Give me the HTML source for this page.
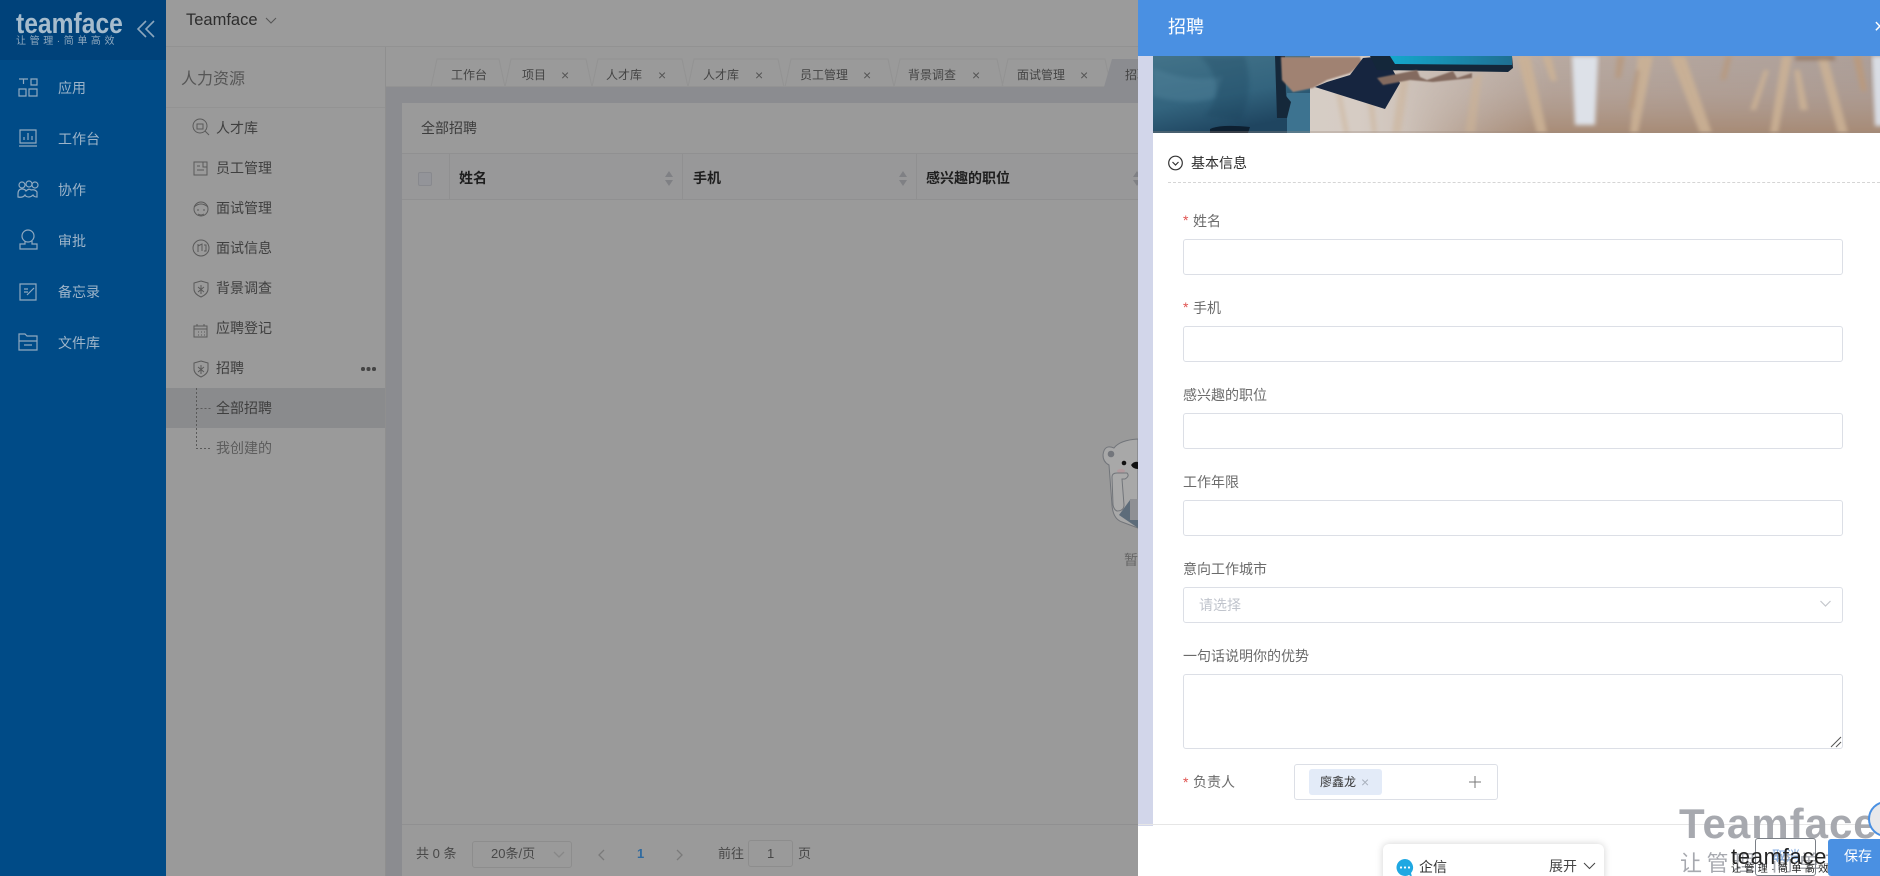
<!DOCTYPE html>
<html lang="zh"><head><meta charset="utf-8"><title>Teamface</title>
<style>
*{box-sizing:border-box;margin:0;padding:0}
html,body{width:1880px;height:876px;overflow:hidden;background:#9a9a9a}
body{position:relative;font-family:"Liberation Sans","Noto Sans CJK SC",sans-serif;font-size:14px}
.a{position:absolute}
.t{position:absolute;white-space:nowrap;line-height:20px;height:20px}
.nav{color:#9db4c9;font-size:14px;left:58px}
.sub{color:#3f3f3f;font-size:14px;left:216px}
.tab{color:#444;font-size:12px;top:65px}
.x{color:#555;font-size:14px;top:65px}
.th{color:#1e1e1e;font-weight:700;font-size:14px;top:168px}
.lbl{color:#6b6b6b;font-size:14px;left:1183px}
.req{color:#e0524f;font-size:14px;left:1183px}
.inp{position:absolute;left:1183px;width:660px;background:#fff;border:1px solid #dcdfe6;border-radius:3px}
svg{position:absolute;overflow:visible}
</style></head><body>

<!-- primary sidebar -->
<div class="a" style="left:0;top:0;width:166px;height:876px;background:#004b87"></div>
<div class="a" style="left:0;top:0;width:166px;height:60px;background:#00427a"></div>
<div class="t" style="left:16px;top:9px;height:30px;line-height:30px;font-size:29px;font-weight:700;color:#a6bccd;transform:scaleX(.85);transform-origin:left">teamface</div>
<div class="t" style="left:16px;top:32px;font-size:10px;color:#8fa9bf;letter-spacing:3.600px">让管理·简单高效</div>
<svg style="left:136px;top:19px" width="20" height="20" fill="none" stroke="#8ba6bd" stroke-width="1.6"><path d="M10 2 2 10l8 8M18 2l-8 8 8 8"/></svg>

<svg style="left:0;top:0" width="166" height="370" fill="none" stroke="#8fa9c0" stroke-width="1.200">
<path d="M19 79h9M23.500 79v5M31 79h6v6h-6zM19 89h7v7h-7zM29 89h8v7h-8z"/>
<path d="M20 130h16v13H20zM19 146h18M24 140v-3M28 140v-7M32 140v-4"/>
<circle cx="22" cy="185" r="3"/><circle cx="29" cy="184" r="3"/><circle cx="35" cy="185" r="3"/><path d="M18 197v-3q0-5 4-5 3 0 4 2 3-3 5-1 4-1 6 2v5q-3 0-4-2-2 2-4 2-3 0-4-2-2 3-7 2z"/>
<circle cx="28" cy="236" r="6"/><path d="M25 241v3h-5v5h17v-5h-5v-3"/>
<path d="M20 284h16v16H20zM24 289h4M24 292h4M27 295l7-7"/>
<path d="M19 334h6l2 2h10v5H19zM19 341h18v9H19zM24 345h8"/>
</svg>
<div class="t nav" style="top:78px">应用</div>
<div class="t nav" style="top:129px">工作台</div>
<div class="t nav" style="top:180px">协作</div>
<div class="t nav" style="top:231px">审批</div>
<div class="t nav" style="top:282px">备忘录</div>
<div class="t nav" style="top:333px">文件库</div>

<!-- top bar -->
<div class="a" style="left:166px;top:0;width:972px;height:47px;background:#9b9b9b;border-bottom:1px solid #929292"></div>
<div class="t" style="left:186px;top:10px;font-size:16.500px;color:#2d2d2d">Teamface</div>
<svg style="left:265px;top:17px" width="12" height="8" fill="none" stroke="#555"><path d="M1 1l5 5 5-5"/></svg>

<!-- secondary sidebar -->
<div class="a" style="left:166px;top:47px;width:220px;height:829px;background:#9a9a9a;border-right:1px solid #8f8f8f"></div>
<div class="a" style="left:166px;top:107px;width:219px;height:1px;background:#939393"></div>
<div class="t" style="left:181px;top:70px;font-size:16px;color:#565656">人力资源</div>
<div class="a" style="left:166px;top:388px;width:219px;height:40px;background:#8a8b8d"></div>
<div class="t sub" style="top:118px">人才库</div>
<div class="t sub" style="top:158px">员工管理</div>
<div class="t sub" style="top:198px">面试管理</div>
<div class="t sub" style="top:238px">面试信息</div>
<div class="t sub" style="top:278px">背景调查</div>
<div class="t sub" style="top:318px">应聘登记</div>
<div class="t sub" style="top:358px">招聘</div>
<div class="t sub" style="top:398px">全部招聘</div>
<div class="t sub" style="top:438px;color:#5c5c5c">我创建的</div>
<svg style="left:0;top:0" width="385" height="470" fill="none" stroke="#5a5a5a" stroke-width="1">
<circle cx="200" cy="126" r="7"/><path d="M205 131l4 4M197 124h6v5h-6z"/>
<path d="M194 162h13v13h-13zM197 166h3M197 170h7M203 162v5h4"/>
<circle cx="201" cy="209" r="7"/><path d="M194 207q7-6 14 0M197 210h2M203 210h2M198 214q3 2 6 0"/>
<circle cx="201" cy="248" r="8"/><path d="M198 244v8M198 246l4-2v7M204 245h2v6h-2"/>
<path d="M201 281l7 2v6q0 5-7 8-7-3-7-8v-6zM198 287l6 5M204 287l-6 5M201 285v9"/>
<path d="M194 326h13v11h-13zM194 329h13M197 324v2M204 324v2M198 332h1M201 332h1M204 332h1M198 335h1M201 335h1M204 335h1"/>
<path d="M201 361l7 2v6q0 5-7 8-7-3-7-8v-6zM198 367l6 5M204 367l-6 5M201 365v9"/>
<path d="M196.500 388v60.500h15M196.500 408.500h15" stroke-dasharray="2 2"/>
</svg>
<div class="a" style="left:361px;top:367px;width:3.500px;height:3.500px;border-radius:50%;background:#444;box-shadow:5.500px 0 0 #444,11px 0 0 #444"></div>

<!-- main -->
<div class="a" style="left:386px;top:48px;width:752px;height:828px;background:#8b8c90"></div>
<div class="a" style="left:386px;top:48px;width:752px;height:39px;background:#9a9a9a;border-bottom:1px solid #939393"></div>
<svg style="left:0;top:0" width="1138" height="90" fill="none" stroke="#939393">
<path d="M431 87l6-28h62l6 28M505 87l6-28h75l6 28M592 87l6-28h84l6 28M688 87l6-28h84l6 28M785 87l6-28h97l6 28M894 87l6-28h97l6 28M1002 87l6-28h97l6 28"/>
<path d="M1104 87l8-28h26v28z" fill="#8b8c90" stroke="none"/>
</svg>
<div class="t tab" style="left:451px">工作台</div>
<div class="t tab" style="left:522px">项目</div>
<div class="t x" style="left:561px">×</div>
<div class="t tab" style="left:606px">人才库</div>
<div class="t x" style="left:658px">×</div>
<div class="t tab" style="left:703px">人才库</div>
<div class="t x" style="left:755px">×</div>
<div class="t tab" style="left:800px">员工管理</div>
<div class="t x" style="left:863px">×</div>
<div class="t tab" style="left:908px">背景调查</div>
<div class="t x" style="left:972px">×</div>
<div class="t tab" style="left:1017px">面试管理</div>
<div class="t x" style="left:1080px">×</div>
<div class="t tab" style="left:1125px;width:13px;overflow:hidden">招聘</div>

<div class="a" style="left:402px;top:103px;width:736px;height:773px;background:#9a9a9a"></div>
<div class="t" style="left:421px;top:118px;font-size:14px;color:#3c3c3c">全部招聘</div>
<div class="a" style="left:402px;top:153px;width:736px;height:47px;background:#989899;border-top:1px solid #909091;border-bottom:1px solid #909091"></div>
<div class="a" style="left:449px;top:153px;width:1px;height:47px;background:#909091"></div>
<div class="a" style="left:682px;top:153px;width:1px;height:47px;background:#909091"></div>
<div class="a" style="left:916px;top:153px;width:1px;height:47px;background:#909091"></div>
<div class="a" style="left:418px;top:172px;width:14px;height:14px;background:#939499;border:1px solid #88898e;border-radius:2px"></div>
<div class="t th" style="left:459px">姓名</div>
<div class="t th" style="left:693px">手机</div>
<div class="t th" style="left:926px">感兴趣的职位</div>
<svg style="left:0;top:0" width="1138" height="200" fill="#7f8084">
<path d="M665 177l4-6 4 6zM665 180l4 6 4-6zM899 177l4-6 4 6zM899 180l4 6 4-6zM1133 177l4-6 4 6zM1133 180l4 6 4-6z"/>
</svg>

<!-- bear -->
<svg style="left:1100px;top:430px" width="38" height="100">
<path d="M38 9Q20 10 14 18 4 14 3 25q0 7 6 10l3 40q1 14 10 17l16 6z" fill="#a8a8a8" stroke="#72757a" stroke-width="1"/>
<circle cx="11" cy="24" r="3.300" fill="#73767c"/>
<circle cx="24" cy="33" r="2.300" fill="#111"/>
<path d="M31 35q3-4 7-3v7q-5 0-7-4z" fill="#111"/>
<ellipse cx="21" cy="41" rx="4" ry="2" fill="#b39a9e"/>
<path d="M19 85l11-15h8v28z" fill="#5d6c7a"/>
<path d="M30 69h8v21h-8z" fill="#8f9094"/>
<path d="M12 47q0-4 5-4h10q3 3-2 6h-3l2 26q0 6-7 6-3-1-4-6z" fill="#aaa" stroke="#72757a" stroke-width="1"/>
</svg>
<div class="t" style="left:1124px;top:550px;font-size:14px;color:#666;width:14px;overflow:hidden">暂无数据</div>

<!-- footer -->
<div class="a" style="left:402px;top:824px;width:736px;height:1px;background:#909091"></div>
<div class="t" style="left:416px;top:844px;color:#484848;font-size:13px">共 0 条</div>
<div class="a" style="left:472px;top:841px;width:100px;height:27px;border:1px solid #8d8d8d;border-radius:3px"></div>
<div class="t" style="left:491px;top:844px;color:#484848;font-size:13px">20条/页</div>
<svg style="left:0;top:0" width="1138" height="876" fill="none" stroke-width="1.300">
<path d="M554 852l5 5 5-5" stroke="#878787"/>
<path d="M604 850l-5 5 5 5" stroke="#7a7a7a"/>
<path d="M677 850l5 5-5 5" stroke="#7a7a7a"/>
</svg>
<div class="t" style="left:637px;top:844px;color:#2f6a9f;font-weight:700;font-size:13px">1</div>
<div class="t" style="left:718px;top:844px;color:#484848;font-size:13px">前往</div>
<div class="a" style="left:748px;top:840px;width:45px;height:27px;border:1px solid #8d8d8d;border-radius:3px"></div>
<div class="t" style="left:767px;top:844px;color:#484848;font-size:13px">1</div>
<div class="t" style="left:798px;top:844px;color:#484848;font-size:13px">页</div>

<!-- drawer -->
<div class="a" style="left:1138px;top:0;width:742px;height:876px;background:#fff"></div>
<div class="a" style="left:1138px;top:56px;width:15px;height:770px;background:#d2d6ea"></div>
<div class="a" style="left:1138px;top:0;width:742px;height:56px;background:#4a90e2"></div>
<div class="t" style="left:1168px;top:16px;font-size:18px;color:#fff;height:22px;line-height:22px">招聘</div>
<div class="t" style="left:1874px;top:16px;font-size:20px;color:#fff;height:22px;line-height:22px">×</div>

<!-- banner -->
<svg style="left:1153px;top:56px;overflow:hidden" width="727" height="77" viewBox="1153 56 727 77">
<defs>
<linearGradient id="bg" x1="0" x2="1"><stop offset="0" stop-color="#d8d1ca"/><stop offset=".28" stop-color="#d6ccc4"/><stop offset=".55" stop-color="#b9aaa1"/><stop offset="1" stop-color="#ad9f99"/></linearGradient>
<linearGradient id="fl" x1="0" y1="0" x2="0" y2="1"><stop offset="0" stop-color="#a89a92" stop-opacity="0"/><stop offset=".5" stop-color="#ab9486" stop-opacity=".4"/><stop offset="1" stop-color="#a5866e" stop-opacity=".85"/></linearGradient>
<linearGradient id="mg" x1="0" x2="1"><stop offset="0" stop-color="#000"/><stop offset=".3" stop-color="#fff"/><stop offset="1" stop-color="#fff"/></linearGradient>
<mask id="m" maskUnits="userSpaceOnUse" x="1153" y="56" width="727" height="77"><rect x="1400" y="56" width="480" height="77" fill="url(#mg)"/></mask>
<linearGradient id="ja" x1="0" x2=".4" y1="0" y2="1"><stop offset="0" stop-color="#437389"/><stop offset=".6" stop-color="#33647e"/><stop offset="1" stop-color="#1f4560"/></linearGradient>
<linearGradient id="sc" x1="0" x2="1"><stop offset="0" stop-color="#14a8cc"/><stop offset="1" stop-color="#1f6f92"/></linearGradient>
<filter id="b"><feGaussianBlur stdDeviation="2.200"/></filter>
<filter id="b2"><feGaussianBlur stdDeviation=".8"/></filter>
</defs>
<rect x="1153" y="56" width="727" height="77" fill="url(#bg)"/>
<rect x="1400" y="56" width="480" height="77" fill="url(#fl)" mask="url(#m)"/>
<g filter="url(#b)" fill="#ccb295" opacity=".85">
<path d="M1344 133l-8-42 5 1 8 41zM1366 85l6 48h5l-5-48zM1392 133l8-55 9 0-8 55z" opacity=".6"/>
<path d="M1465 133l8-55 9-5-7 60z" opacity=".7"/>
<path d="M1517 56h13l17 77h-10zM1542 56h9l6 25h-6z"/>
<path d="M1638 56h15l-15 77h-8z"/>
<path d="M1670 56h15l27 77h-12z"/>
<path d="M1617 56h8l-4 22h-6zM1628 110l8-40h4l-6 40zM1720 80l6-24h6l-6 24z" fill="#b79a80"/>
<path d="M1750 110l14-40h5l-13 40zM1782 56h10l-14 77h-8zM1817 56h10l21 77h-10zM1800 110l-6-40 6 0 8 40z"/>
<path d="M1853 56h8l6 35h-6z" fill="#bb9a7c"/>
<path d="M1795 56h40v4h-40z" fill="#8f6f5a"/>
</g>
<path d="M1572 56h26l-3 69h-20z" fill="#dde1e8" filter="url(#b)"/>
<path d="M1872 56h12v70h-9z" fill="#d9dde4" filter="url(#b)"/>
<path d="M1153 56h157v77h-157z" fill="url(#ja)"/>
<path d="M1153 68q40 16 70 8l-8 22q-30 8-62-2z" fill="#5a8ba3" opacity=".35" filter="url(#b)"/>
<path d="M1200 56q30 30 5 60l35 5q15-30 5-65z" fill="#193d57" opacity=".25" filter="url(#b)"/>
<path d="M1287 93h23v40h-23z" fill="#3d7390"/>
<path d="M1275 56h10l1 40 5 6-4 16h-10z" fill="#15283a"/>
<path d="M1210 129q10-5 40-2l-2 6h-38z" fill="#0d1f30"/>
<path d="M1281 57h79l2 6-12 10-23 7-14 8-20 4-11-12z" fill="#a08272" filter="url(#b2)"/>
<path d="M1315 87l12-5 23-7 13-17 22-2 15 27-15 26z" fill="#16253f"/>
<path d="M1370 56h142l1 12-5 4-131-2z" fill="#14273a"/>
<path d="M1390 56h122v9l-117-1z" fill="url(#sc)"/>
<path d="M1377 78l40-8 3 7 7 3 26-9 4 7 15-5v5l-39 4-23-2-27 5z" fill="#836a5f" filter="url(#b2)"/>
<rect x="1153" y="131" width="727" height="2" fill="#9c8b80" opacity=".3"/>
</svg>

<!-- section -->
<svg style="left:1168px;top:155px" width="16" height="16" fill="none" stroke="#333" stroke-width="1.200"><circle cx="7.500" cy="8" r="6.800"/><path d="M4.500 7l3 3 3-3"/></svg>
<div class="t" style="left:1191px;top:153px;font-size:14px;color:#2b2b2b">基本信息</div>
<div class="a" style="left:1168px;top:182px;width:712px;height:0;border-top:1px dashed #d5d5d5"></div>

<!-- form -->
<div class="t req" style="top:210px">*</div><div class="t lbl" style="left:1193px;top:211px">姓名</div>
<div class="inp" style="top:239px;height:36px"></div>
<div class="t req" style="top:297px">*</div><div class="t lbl" style="left:1193px;top:298px">手机</div>
<div class="inp" style="top:326px;height:36px"></div>
<div class="t lbl" style="top:385px">感兴趣的职位</div>
<div class="inp" style="top:413px;height:36px"></div>
<div class="t lbl" style="top:472px">工作年限</div>
<div class="inp" style="top:500px;height:36px"></div>
<div class="t lbl" style="top:559px">意向工作城市</div>
<div class="inp" style="top:587px;height:36px"></div>
<div class="t" style="left:1199px;top:595px;font-size:14px;color:#c0c4cc">请选择</div>
<svg style="left:1820px;top:600px" width="12" height="8" fill="none" stroke="#c4c7cc" stroke-width="1.200"><path d="M.5 1l5 5 5-5"/></svg>
<div class="t lbl" style="top:646px">一句话说明你的优势</div>
<div class="inp" style="top:674px;height:75px"></div>
<svg style="left:1830px;top:736px" width="12" height="12" fill="none" stroke="#555"><path d="M1 11L11 1M6 11l5-5"/></svg>
<div class="t req" style="top:772px">*</div><div class="t lbl" style="left:1193px;top:772px">负责人</div>
<div class="a" style="left:1294px;top:764px;width:204px;height:36px;border:1px solid #dcdfe6;border-radius:3px"></div>
<div class="a" style="left:1309px;top:769px;width:73px;height:26px;background:#e3ebf8;border-radius:3px"></div>
<div class="t" style="left:1320px;top:772px;font-size:12px;color:#333">廖鑫龙</div>
<div class="t" style="left:1361px;top:772px;font-size:14px;color:#a9b1bd">×</div>
<svg style="left:1469px;top:776px" width="12" height="12" stroke="#777" stroke-width="1"><path d="M6 0v12M0 6h12"/></svg>

<!-- drawer footer -->
<div class="a" style="left:1138px;top:824px;width:742px;height:1px;background:#e6e6e6"></div>
<div class="a" style="left:1383px;top:844px;width:221px;height:40px;background:#fff;border-radius:6px;box-shadow:0 0 8px rgba(0,0,0,.18)"></div>
<svg style="left:1396px;top:858px" width="20" height="20"><path d="M9 1a8.500 8.500 0 1 0 4 16l3 2-1-4A8.500 8.500 0 0 0 9 1z" fill="#1fa8e2"/><g fill="#fff"><circle cx="5" cy="9.500" r="1.100"/><circle cx="9" cy="9.500" r="1.100"/><circle cx="13" cy="9.500" r="1.100"/></g></svg>
<div class="t" style="left:1419px;top:857px;font-size:14px;color:#333">企信</div>
<div class="t" style="left:1549px;top:856px;font-size:14px;color:#444">展开</div>
<svg style="left:1583px;top:862px" width="13" height="8" fill="none" stroke="#444"><path d="M1 1l5.500 5.500L12 1"/></svg>

<!-- watermark -->
<div class="t" style="left:1679px;top:801px;height:46px;line-height:46px;font-size:42px;font-weight:700;color:#a7a9af;letter-spacing:1px">Teamface</div>
<div class="t" style="left:1680px;top:850px;height:28px;line-height:28px;font-size:22px;color:#a7a9af;letter-spacing:4.500px">让管理·简单高效</div>
<svg style="left:1868px;top:801px" width="14" height="36" fill="#e8e8ea" stroke="#4a90e2" stroke-width="2"><circle cx="18" cy="18" r="17"/></svg>
<div class="a" style="left:1755px;top:838px;width:61px;height:38px;border:1px solid #7b8087;border-radius:3px"></div>
<div class="t" style="left:1772px;top:846px;font-size:14px;color:#87aee0">取消</div>
<div class="a" style="left:1828px;top:839px;width:52px;height:37px;background:#4a90e2;border-radius:3px 0 0 3px"></div>
<div class="t" style="left:1844px;top:846px;font-size:14px;color:#fff">保存</div>
<div class="t" style="left:1731px;top:845px;height:24px;line-height:24px;font-size:22px;color:#222;letter-spacing:.7px">teamface</div>
<div class="t" style="left:1731px;top:864px;height:12px;line-height:12px;font-size:10px;color:#222;letter-spacing:3.400px">让管理·简单高效</div>
</body></html>
